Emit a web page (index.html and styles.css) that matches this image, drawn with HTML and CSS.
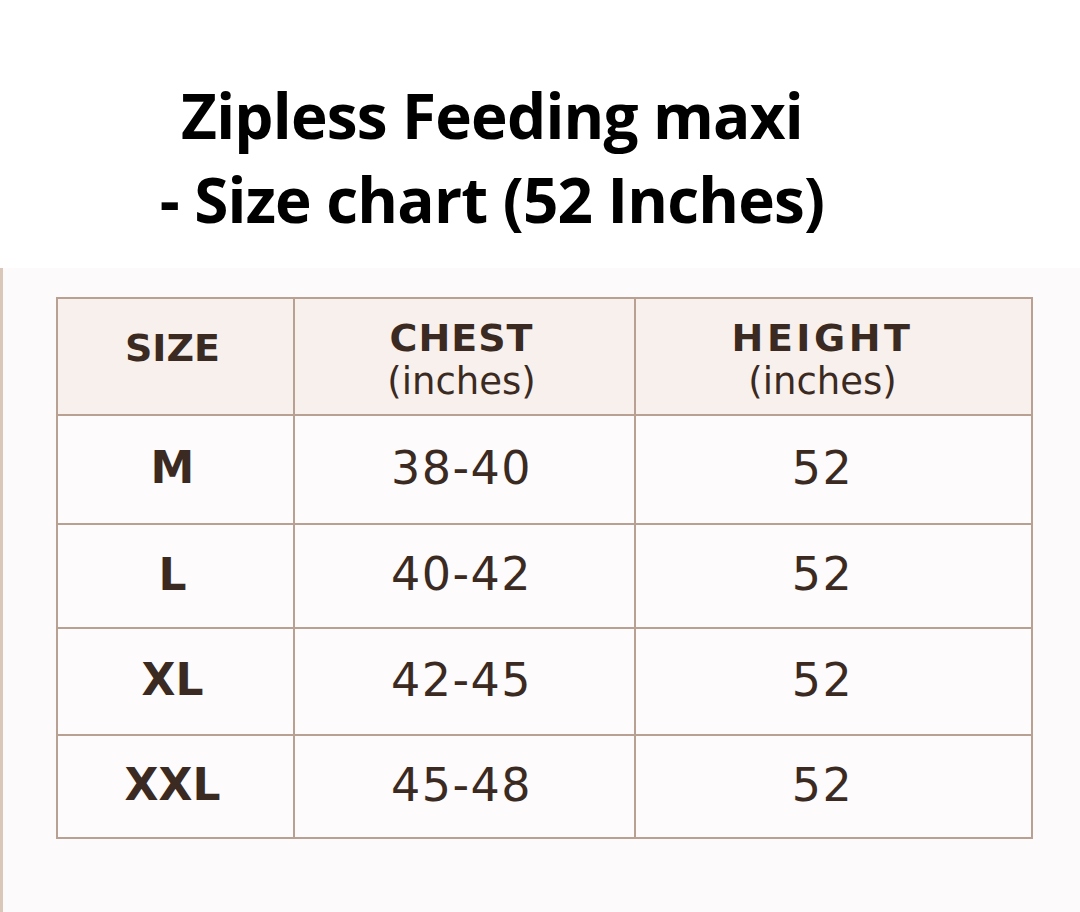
FILE: index.html
```html
<!DOCTYPE html>
<html lang="en">
<head>
<meta charset="utf-8">
<title>Zipless Feeding maxi - Size chart</title>
<link rel="stylesheet" href="styles.css">
</head>
<body>
<div class="page">
  <header class="title-area">
    <h1 class="title"><span class="title-line">Zipless Feeding maxi</span><span class="title-line">- Size chart (52 Inches)</span></h1>
  </header>
  <section class="panel">
    <table class="chart">
      <colgroup>
        <col class="c-size">
        <col class="c-chest">
        <col class="c-height">
      </colgroup>
      <thead>
        <tr class="head-row">
          <th class="h-size"><span class="h-size-text">SIZE</span></th>
          <th class="col-chest h-two"><span class="h-main">CHEST</span><span class="h-sub">(inches)</span></th>
          <th class="col-height h-two"><span class="h-main h-wide">HEIGHT</span><span class="h-sub">(inches)</span></th>
        </tr>
      </thead>
      <tbody>
        <tr class="r1"><td class="size">M</td><td class="col-chest">38-40</td><td class="col-height">52</td></tr>
        <tr class="r2"><td class="size">L</td><td class="col-chest">40-42</td><td class="col-height">52</td></tr>
        <tr class="r3"><td class="size">XL</td><td class="col-chest">42-45</td><td class="col-height">52</td></tr>
        <tr class="r4"><td class="size">XXL</td><td class="col-chest">45-48</td><td class="col-height">52</td></tr>
      </tbody>
    </table>
  </section>
</div>
</body>
</html>
```

FILE: styles.css
```css
html, body {
  margin: 0;
  padding: 0;
  background: #ffffff;
}

.page {
  width: 1080px;
  height: 912px;
  display: flex;
  flex-direction: column;
  overflow: hidden;
}

.title-area {
  height: 268px;
  display: flex;
  justify-content: center;
  padding-right: 96px;
  box-sizing: border-box;
}

.title {
  margin: 0;
  padding-top: 73px;
  font-family: "Open Sans", "Liberation Sans", sans-serif;
  font-weight: 700;
  font-size: 62px;
  line-height: 84px;
  letter-spacing: -0.8px;
  color: #000000;
  text-align: center;
}

.title-line {
  display: block;
}

.panel {
  flex: 1;
  background: #fcfafa;
  border-left: 3px solid #d9c8b9;
  padding-top: 29px;
  padding-left: 53px;
}

.chart {
  border-collapse: collapse;
  table-layout: fixed;
  width: 975px;
  font-family: "DejaVu Sans", "Liberation Sans", sans-serif;
  color: #3b2a21;
}

.c-size { width: 237px; }
.c-chest { width: 341px; }
.c-height { width: 397px; }

.chart th,
.chart td {
  border: 2px solid #b8a192;
  text-align: center;
  vertical-align: middle;
  padding: 0 6px 4px 0;
}

.chart .col-height {
  padding-right: 22px;
}

.chart th {
  background: #f7f0ec;
  font-weight: 700;
}

.chart th.h-two {
  padding-top: 8px;
  padding-bottom: 0;
}

.head-row { height: 117px; }
.r1 { height: 109px; }
.r2 { height: 104px; }
.r3 { height: 107px; }
.r4 { height: 103px; }

.h-size-text {
  display: block;
  font-size: 38px;
  line-height: 44px;
  margin-bottom: 14px;
}

.h-main {
  display: block;
  font-size: 38px;
  line-height: 42px;
  letter-spacing: 1px;
}

.h-wide {
  letter-spacing: 3.5px;
}

.h-sub {
  display: block;
  font-size: 37px;
  line-height: 46px;
  font-weight: 400;
}

.chart td {
  background: #fdfbfb;
  font-size: 46px;
  font-weight: 400;
  letter-spacing: 1.5px;
}

.chart td.size {
  font-size: 44px;
  font-weight: 700;
  letter-spacing: 0;
}
```
